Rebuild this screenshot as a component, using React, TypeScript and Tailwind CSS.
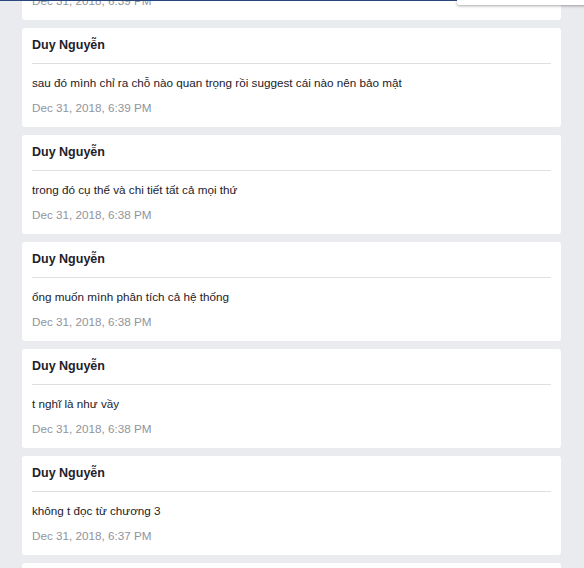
import React from 'react';

interface Message {
  sender: string;
  text: string;
  time: string;
}

const messages: Message[] = [
  { sender: 'Duy Nguyễn', text: 'ok', time: 'Dec 31, 2018, 6:39 PM' },
  {
    sender: 'Duy Nguyễn',
    text: 'sau đó mình chỉ ra chỗ nào quan trọng rồi suggest cái nào nên bảo mật',
    time: 'Dec 31, 2018, 6:39 PM',
  },
  { sender: 'Duy Nguyễn', text: 'trong đó cụ thể và chi tiết tất cả mọi thứ', time: 'Dec 31, 2018, 6:38 PM' },
  { sender: 'Duy Nguyễn', text: 'ổng muốn mình phân tích cả hệ thống', time: 'Dec 31, 2018, 6:38 PM' },
  { sender: 'Duy Nguyễn', text: 't nghĩ là như vầy', time: 'Dec 31, 2018, 6:38 PM' },
  { sender: 'Duy Nguyễn', text: 'không t đọc từ chương 3', time: 'Dec 31, 2018, 6:37 PM' },
  { sender: 'Duy Nguyễn', text: 'ừ', time: 'Dec 31, 2018, 6:37 PM' },
];

function MessageCard({ message }: { message: Message }) {
  return (
    <div className="bg-white rounded-[3px] px-[10px] pt-[9px] pb-[11px] h-[99px] shrink-0">
      <div className="h-[16px] leading-[16px] text-[12.5px] font-bold text-[#1d2129] pb-[10px] box-content border-b border-[#dddfe2]">
        {message.sender}
      </div>
      <div className="mt-[11px] h-[16px] leading-[16px] text-[11.7px] text-[#1d2129]">{message.text}</div>
      <div className="mt-[9px] h-[16px] leading-[16px] text-[11.7px] text-[#90949c]">{message.time}</div>
    </div>
  );
}

export default function App() {
  return (
    <div
      className="relative h-[568px] w-[584px] overflow-hidden bg-[#e9ebee]"
      style={{ fontFamily: '"Liberation Sans", Arial, sans-serif' }}
    >
      <div className="flex flex-col gap-[8px] pl-[22px] w-[561px] -mt-[79px]">
        {messages.map((m, i) => (
          <MessageCard key={i} message={m} />
        ))}
      </div>

      {/* header remnant + dropdown */}
      <div className="absolute top-0 left-0 w-[457px] h-[1px] bg-[#29487d]" />
      <div className="absolute top-0 left-[457px] w-[140px] h-[5px] bg-white shadow-[0_1px_3px_rgba(0,0,0,0.35)] rounded-bl-[2px]" />
    </div>
  );
}
